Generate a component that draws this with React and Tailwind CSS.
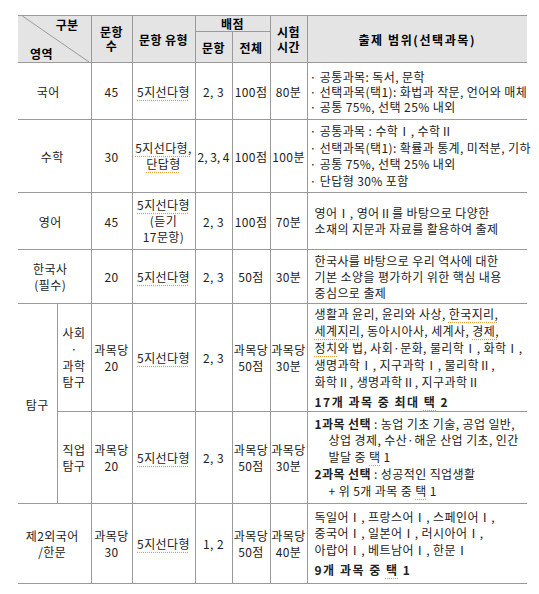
import React from 'react';

const Sq = ({ children }) => (
  <span className="underline decoration-dotted decoration-[#d9a23a] underline-offset-[3px]">{children}</span>
);

const c = 'border border-[#9a9a9a] p-0 text-center align-middle';
const hd = c + ' bg-[#e4e4e4] font-bold text-black';

const App = () => {
  return (
    <div className="w-[539px] h-[594px] bg-white pt-[15px] pl-[18px] font-['Noto_Sans_CJK_KR',sans-serif] text-[12px] leading-[17px] tracking-[0.4px] text-[#222]">
      <table className="w-[509px] table-fixed border-collapse">
        <colgroup>
          <col className="w-[39px]" />
          <col className="w-[34px]" />
          <col className="w-[41px]" />
          <col className="w-[63px]" />
          <col className="w-[37px]" />
          <col className="w-[38px]" />
          <col className="w-[37px]" />
          <col className="w-[220px]" />
        </colgroup>
        <thead>
          <tr className="h-[16px]">
            <td colSpan={2} rowSpan={2} className={hd + ' border-l-0 relative'}>
              <svg className="absolute inset-0 w-full h-full" preserveAspectRatio="none" viewBox="0 0 100 100">
                <line x1="6" y1="0" x2="98" y2="100" stroke="#9a9a9a" strokeWidth="1" vectorEffect="non-scaling-stroke" />
              </svg>
              <div className="relative flex flex-col h-[46px] px-[12px] leading-[15px]">
                <span className="self-end mt-[1px]">구분</span>
                <span className="self-start mt-auto mb-[1px]">영역</span>
              </div>
            </td>
            <td rowSpan={2} className={hd + ' leading-[14px]'}>문항<br />수</td>
            <td rowSpan={2} className={hd}>문항 유형</td>
            <td colSpan={2} className={hd + ' leading-[14px]'}>배점</td>
            <td rowSpan={2} className={hd + ' leading-[15px]'}>시험<br />시간</td>
            <td rowSpan={2} className={hd + ' border-r-0 tracking-[1.6px]'}>출제 범위(선택과목)</td>
          </tr>
          <tr className="h-[30px]">
            <td className={hd}>문항</td>
            <td className={hd}>전체</td>
          </tr>
        </thead>
        <tbody>
          <tr className="h-[57px]">
            <td colSpan={2} className={c + ' border-l-0 pr-[12px]'}>국어</td>
            <td className={c}>45</td>
            <td className={c}><Sq>5지선다형</Sq></td>
            <td className={c}>2, 3</td>
            <td className={c}>100점</td>
            <td className={c}>80분</td>
            <td className={c + ' border-r-0 text-left pl-[2px] leading-[15px] whitespace-nowrap'}>
              <div>· 공통과목: 독서, 문학</div>
              <div>· 선택과목(택1): 화법과 작문, 언어와 매체</div>
              <div>· 공통 75%, 선택 25% 내외</div>
            </td>
          </tr>
          <tr className="h-[73px]">
            <td colSpan={2} className={c + ' border-l-0 pr-[4px]'}>수학</td>
            <td className={c}>30</td>
            <td className={c + ' leading-[16px]'}><Sq>5지선다형,</Sq><br /><Sq>단답형</Sq></td>
            <td className={c + ' tracking-normal'}>2, 3, 4</td>
            <td className={c}>100점</td>
            <td className={c}>100분</td>
            <td className={c + ' border-r-0 text-left pl-[2px] leading-[16.5px] whitespace-nowrap'}>
              <div>· 공통과목 : 수학Ⅰ, 수학Ⅱ</div>
              <div>· 선택과목(택1): 확률과 통계, 미적분, 기하</div>
              <div>· 공통 75%, 선택 25% 내외</div>
              <div>· 단답형 30% 포함</div>
            </td>
          </tr>
          <tr className="h-[57px]">
            <td colSpan={2} className={c + ' border-l-0 pr-[8px]'}>영어</td>
            <td className={c}>45</td>
            <td className={c + ' leading-[16px]'}><Sq>5지선다형</Sq><br />(듣기<br />17문항)</td>
            <td className={c}>2, 3</td>
            <td className={c}>100점</td>
            <td className={c}>70분</td>
            <td className={c + ' border-r-0 text-left pl-[7px] leading-[16px] whitespace-nowrap'}>
              <div>영어Ⅰ, 영어Ⅱ를 바탕으로 다양한</div>
              <div>소재의 지문과 자료를 활용하여 출제</div>
            </td>
          </tr>
          <tr className="h-[54px]">
            <td colSpan={2} className={c + ' border-l-0 pr-[8px] leading-[16px]'}>한국사<br />(필수)</td>
            <td className={c}>20</td>
            <td className={c}><Sq>5지선다형</Sq></td>
            <td className={c}>2, 3</td>
            <td className={c}>50점</td>
            <td className={c}>30분</td>
            <td className={c + ' border-r-0 text-left pl-[7px] leading-[16px] whitespace-nowrap'}>
              <div>한국사를 바탕으로 우리 역사에 대한</div>
              <div>기본 소양을 평가하기 위한 핵심 내용</div>
              <div>중심으로 출제</div>
            </td>
          </tr>
          <tr className="h-[108px]">
            <td rowSpan={2} className={c + ' border-l-0 pt-[2px]'}>탐구</td>
            <td className={c + ' leading-[16.5px]'}>사회<br />·<br />과학<br />탐구</td>
            <td className={c + ' leading-[16px]'}>과목당<br />20</td>
            <td className={c}><Sq>5지선다형</Sq></td>
            <td className={c}>2, 3</td>
            <td className={c + ' leading-[16px]'}>과목당<br />50점</td>
            <td className={c + ' leading-[16px]'}>과목당<br />30분</td>
            <td className={c + ' border-r-0 text-left pl-[7px] leading-[17px] whitespace-nowrap'}>
              <div>생활과 윤리, 윤리와 사상, <Sq>한국지리,</Sq></div>
              <div><Sq>세계지리</Sq>, 동아시아사, 세계사, <Sq>경제,</Sq></div>
              <div><Sq>정치</Sq>와 법, 사회·문화, 물리학Ⅰ, 화학Ⅰ,</div>
              <div>생명과학Ⅰ, 지구과학Ⅰ, 물리학Ⅱ,</div>
              <div>화학Ⅱ, 생명과학Ⅱ, 지구과학Ⅱ</div>
              <div className="font-bold mt-[3px] tracking-[1.5px]">17개 과목 중 최대 <Sq>택</Sq> 2</div>
            </td>
          </tr>
          <tr className="h-[92px]">
            <td className={c + ' leading-[16px]'}>직업<br />탐구</td>
            <td className={c + ' leading-[16px]'}>과목당<br />20</td>
            <td className={c}><Sq>5지선다형</Sq></td>
            <td className={c}>2, 3</td>
            <td className={c + ' leading-[16px]'}>과목당<br />50점</td>
            <td className={c + ' leading-[16px]'}>과목당<br />30분</td>
            <td className={c + ' border-r-0 text-left pl-[7px] leading-[16.8px] whitespace-nowrap'}>
              <div><span className="font-bold">1과목 선택</span> : 농업 기초 기술, 공업 일반,</div>
              <div className="pl-[14px]">상업 경제, 수산·해운 산업 기초, 인간</div>
              <div className="pl-[14px]">발달 중 <Sq>택</Sq> 1</div>
              <div><span className="font-bold">2과목 선택</span> : 성공적인 직업생활</div>
              <div className="pl-[14px]">+ 위 5개 과목 중 <Sq>택</Sq> 1</div>
            </td>
          </tr>
          <tr className="h-[80px]">
            <td colSpan={2} className={c + ' border-l-0 pr-[4px] leading-[16px]'}>제2외국어<br />/한문</td>
            <td className={c + ' leading-[16px]'}>과목당<br />30</td>
            <td className={c}><Sq>5지선다형</Sq></td>
            <td className={c}>1, 2</td>
            <td className={c + ' leading-[16px]'}>과목당<br />50점</td>
            <td className={c + ' leading-[16px]'}>과목당<br />40분</td>
            <td className={c + ' border-r-0 text-left pl-[7px] leading-[16.7px] whitespace-nowrap'}>
              <div>독일어Ⅰ, 프랑스어Ⅰ, 스페인어Ⅰ,</div>
              <div>중국어Ⅰ, 일본어Ⅰ, 러시아어Ⅰ,</div>
              <div>아랍어Ⅰ, 베트남어Ⅰ, 한문Ⅰ</div>
              <div className="font-bold mt-[3px] tracking-[1.5px]">9개 과목 중 <Sq>택</Sq> 1</div>
            </td>
          </tr>
        </tbody>
      </table>
    </div>
  );
};

export default App;
